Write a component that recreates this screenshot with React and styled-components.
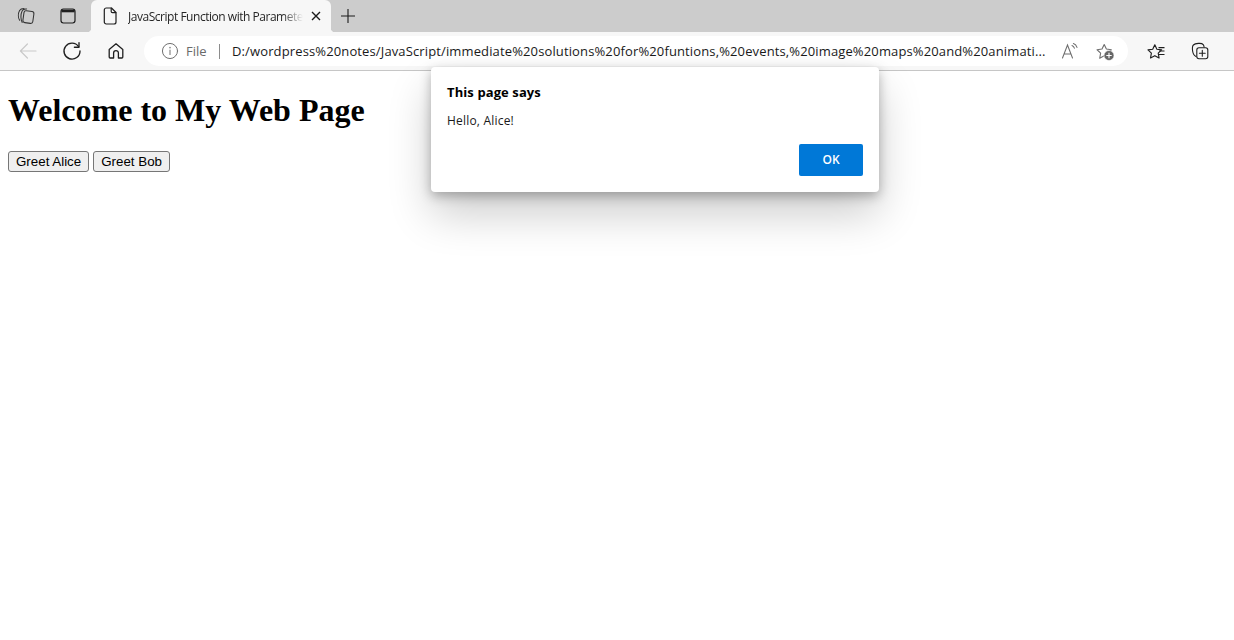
import React from "react"
import styled, { createGlobalStyle } from "styled-components"

const GlobalStyle = createGlobalStyle`
  html, body {
    margin: 0;
    height: 100%;
    background: #fff;
    overflow: hidden;
  }
`

const uiFont = `"Open Sans", "Noto Sans", Arial, sans-serif`

const Window = styled.div`
  position: relative;
  height: 640px;
  display: flex;
  flex-direction: column;
  font-family: ${uiFont};
`

const TabStrip = styled.div`
  height: 32px;
  display: flex;
  align-items: stretch;
  padding-left: 5px;
  background: #cccccc;
`

const StripButton = styled.div`
  width: ${p => p.$width || 42}px;
  display: flex;
  align-items: center;
  justify-content: center;
`

const Tab = styled.div`
  position: relative;
  width: 240px;
  margin-left: 2px;
  display: flex;
  align-items: center;
  padding: 0 7px 0 9px;
  box-sizing: border-box;
  background: #f7f7f7;
  border-radius: 6px 6px 0 0;

  &::before,
  &::after {
    content: "";
    position: absolute;
    bottom: 0;
    width: 4px;
    height: 4px;
  }
  &::before {
    left: -4px;
    background: radial-gradient(circle at 0 0, transparent 4px, #f7f7f7 4.5px);
  }
  &::after {
    right: -4px;
    background: radial-gradient(circle at 100% 0, transparent 4px, #f7f7f7 4.5px);
  }
`

const TabTitle = styled.span`
  flex: 1;
  margin-left: 8px;
  overflow: hidden;
  white-space: nowrap;
  font-size: 12px;
  letter-spacing: -0.47px;
  color: #262626;
  -webkit-mask-image: linear-gradient(to right, #000 88%, transparent 100%);
  mask-image: linear-gradient(to right, #000 88%, transparent 100%);
`

const TabClose = styled.div`
  width: 16px;
  display: flex;
  justify-content: center;
  margin-left: 5px;
`

const Toolbar = styled.div`
  height: 38px;
  display: flex;
  align-items: center;
  padding: 0 12px 0 6px;
  background: #f7f7f7;
  border-bottom: 1px solid #c6c6c6;
`

const ToolButton = styled.div`
  width: 44px;
  height: 30px;
  display: flex;
  align-items: center;
  justify-content: center;
`

const AddressBar = styled.div`
  flex: 1;
  height: 30px;
  margin: 0 6px;
  display: flex;
  align-items: center;
  padding-left: 17px;
  background: #fff;
  border-radius: 15px;
  min-width: 0;
`

const SiteLabel = styled.span`
  margin-left: 7px;
  width: 21px;
  font-size: 13px;
  letter-spacing: 0;
  color: #6a6a6a;
`

const Separator = styled.span`
  width: 1px;
  height: 15px;
  margin: 0 12px;
  background: #8c8c8c;
`

const Url = styled.span`
  width: 816px;
  font-size: 13px;
  letter-spacing: 0.13px;
  white-space: nowrap;
  overflow: hidden;
  color: #1a1a1a;
`

const AddressIcons = styled.div`
  display: flex;
  align-items: center;
  gap: 16px;
  margin-left: 13px;
`

const Page = styled.main`
  flex: 1;
  margin: 0 8px;
  font-family: "Liberation Serif", "Times New Roman", serif;
  color: #000;
`

const Heading = styled.h1`
  margin: 21.44px 0;
  font-size: 32px;
  font-weight: 700;
`

const ButtonRow = styled.div`
  display: flex;
  gap: 4px;
`

const GreetButton = styled.button`
  height: 21px;
  padding: 1px 7px;
  box-sizing: border-box;
  font-family: "Liberation Sans", Arial, sans-serif;
  font-size: 13.33px;
  color: #000;
  background: #efefef;
  border: 1px solid #767676;
  border-radius: 3px;
`

const Dialog = styled.div`
  position: absolute;
  left: 431px;
  top: 67px;
  width: 448px;
  height: 125px;
  padding: 16px;
  box-sizing: border-box;
  display: flex;
  flex-direction: column;
  background: #fff;
  border-radius: 4px;
  box-shadow: 0 22px 44px rgba(0, 0, 0, 0.2), 0 4px 12px rgba(0, 0, 0, 0.28);
`

const DialogTitle = styled.div`
  font-size: 13px;
  line-height: 18px;
  font-weight: 700;
  letter-spacing: 0.1px;
  color: #000;
`

const DialogMessage = styled.div`
  margin-top: 11px;
  font-size: 12px;
  line-height: 18px;
  letter-spacing: 0.2px;
  color: #1a1a1a;
`

const DialogActions = styled.div`
  margin-top: auto;
  display: flex;
  justify-content: flex-end;
`

const OkButton = styled.button`
  width: 64px;
  height: 32px;
  padding: 0 0 2px;
  font-family: ${uiFont};
  font-size: 12px;
  font-weight: 600;
  color: #fff;
  background: #0078d7;
  border: 0;
  border-radius: 2px;
`

const Icon = ({ size = 20, children, stroke = "#1f1f1f", width = 1.2 }) => (
  <svg
    width={size}
    height={size}
    viewBox="0 0 20 20"
    fill="none"
    stroke={stroke}
    strokeWidth={width}
    strokeLinecap="round"
    strokeLinejoin="round"
  >
    {children}
  </svg>
)

const starPath = "M8 3l1.9 4 4.3.6-3.1 3 .8 4.4L8 12.9 4.1 15l.8-4.4-3.1-3 4.3-.6z"

export default function App() {
  return (
    <Window>
      <GlobalStyle />
      <TabStrip>
        <StripButton>
          <Icon width={1.05} stroke="#333">
            <rect x="7.4" y="5" width="10" height="12" rx="2.2" transform="rotate(8 12 11)" />
            <path d="M6.2 16.4C4.6 13.8 4.4 8.6 6.2 4.8 6.8 3.4 8 2.8 10.6 3" />
            <path d="M3.6 14.2C2 11.6 2 7.2 3.6 4.4 4.4 3 5.6 2.4 8 2.4" />
          </Icon>
        </StripButton>
        <StripButton>
          <Icon width={1.2}>
            <rect x="3" y="3" width="14" height="14" rx="2.4" />
            <path d="M3.4 5h13.2" strokeWidth="2.6" strokeLinecap="butt" />
          </Icon>
        </StripButton>
        <Tab>
          <Icon>
            <path d="M4.3 4a2 2 0 0 1 2-2h5.2L16 6.5V16a2 2 0 0 1-2 2H6.3a2 2 0 0 1-2-2z" />
            <path d="M11.2 2.2v3.2a1.2 1.2 0 0 0 1.2 1.2h3.4" />
          </Icon>
          <TabTitle>JavaScript Function with Parameters</TabTitle>
          <TabClose>
            <svg width="10" height="10" viewBox="0 0 10 10" stroke="#1a1a1a" strokeWidth="1.4">
              <path d="M1 1l8 8M9 1l-8 8" />
            </svg>
          </TabClose>
        </Tab>
        <StripButton $width={34}>
          <svg width="14" height="14" viewBox="0 0 14 14" stroke="#1a1a1a" strokeWidth="1.1">
            <path d="M7 0v14M0 7h14" />
          </svg>
        </StripButton>
      </TabStrip>

      <Toolbar>
        <ToolButton>
          <Icon stroke="#c9c9c9" width={1.2} size={20}>
            <path d="M18 10H2.4M9.4 3L2.4 10l7 7" />
          </Icon>
        </ToolButton>
        <ToolButton>
          <Icon width={1.35}>
            <path d="M16.6 5.6A8 8 0 1 0 18 10" />
            <path d="M17 1.6v4.6h-4.6" />
          </Icon>
        </ToolButton>
        <ToolButton>
          <Icon size={20} width={1.3}>
            <path d="M3.2 16V8.4L10 2.8l6.8 5.6V16a1 1 0 0 1-1 1h-3.4v-5a2.4 2.4 0 0 0-4.8 0v5H4.2a1 1 0 0 1-1-1z" />
          </Icon>
        </ToolButton>
        <AddressBar>
          <Icon size={18} stroke="#6e6e6e" width={1.1}>
            <circle cx="10" cy="10" r="8.4" />
            <path d="M10 9v5" />
            <path d="M10 6v.4" strokeWidth="1.5" />
          </Icon>
          <SiteLabel>File</SiteLabel>
          <Separator />
          <Url>D:/wordpress%20notes/JavaScript/immediate%20solutions%20for%20funtions,%20events,%20image%20maps%20and%20animati...</Url>
          <AddressIcons>
            <svg width="18" height="18" viewBox="0 0 18 18" fill="none" stroke="#6e6e6e" strokeWidth="1.05" strokeLinecap="round">
              <path d="M1.5 16L6.5 3l5 13M3.2 12h6.6" />
              <path d="M11 3.6c1.2.5 2 1.4 2.4 2.6M12.4 1.6c1.8.7 3 2 3.6 3.8" />
            </svg>
            <svg width="20" height="20" viewBox="0 0 20 20" fill="none">
              <path d={starPath} transform="scale(1.15)" stroke="#6e6e6e" strokeWidth="0.95" strokeLinejoin="round" />
              <circle cx="14" cy="14.5" r="5" fill="#666" stroke="#fff" strokeWidth="0.6" />
              <path d="M14 11.8v5.4M11.3 14.5h5.4" stroke="#fff" strokeWidth="1.1" />
            </svg>
          </AddressIcons>
        </AddressBar>
        <ToolButton>
          <svg width="20" height="20" viewBox="0 0 20 20" fill="none" stroke="#1f1f1f" strokeWidth="1.05" strokeLinejoin="round">
            <path d={starPath} transform="translate(0 0.5) scale(1.1)" />
            <path d="M12.5 6.6h6M13 10h5.5M12 13.4h6.5" />
          </svg>
        </ToolButton>
        <ToolButton>
          <Icon width={1.1}>
            <path d="M6 15.4c-1.6-.6-3-2.6-3.4-5.4-.4-2.8-.2-5 .8-6 .8-.8 2.6-1.4 5-1.6 2.4-.2 4 .2 4.8 1.2.4.5.7 1.3.9 2.4" />
            <rect x="6.8" y="6.8" width="11" height="11" rx="2.2" />
            <path d="M12.3 9.4v5.8M9.4 12.3h5.8" />
          </Icon>
        </ToolButton>
      </Toolbar>

      <Page>
        <Heading>Welcome to My Web Page</Heading>
        <ButtonRow>
          <GreetButton>Greet Alice</GreetButton>
          <GreetButton>Greet Bob</GreetButton>
        </ButtonRow>
      </Page>

      <Dialog>
        <DialogTitle>This page says</DialogTitle>
        <DialogMessage>Hello, Alice!</DialogMessage>
        <DialogActions>
          <OkButton>OK</OkButton>
        </DialogActions>
      </Dialog>
    </Window>
  )
}
